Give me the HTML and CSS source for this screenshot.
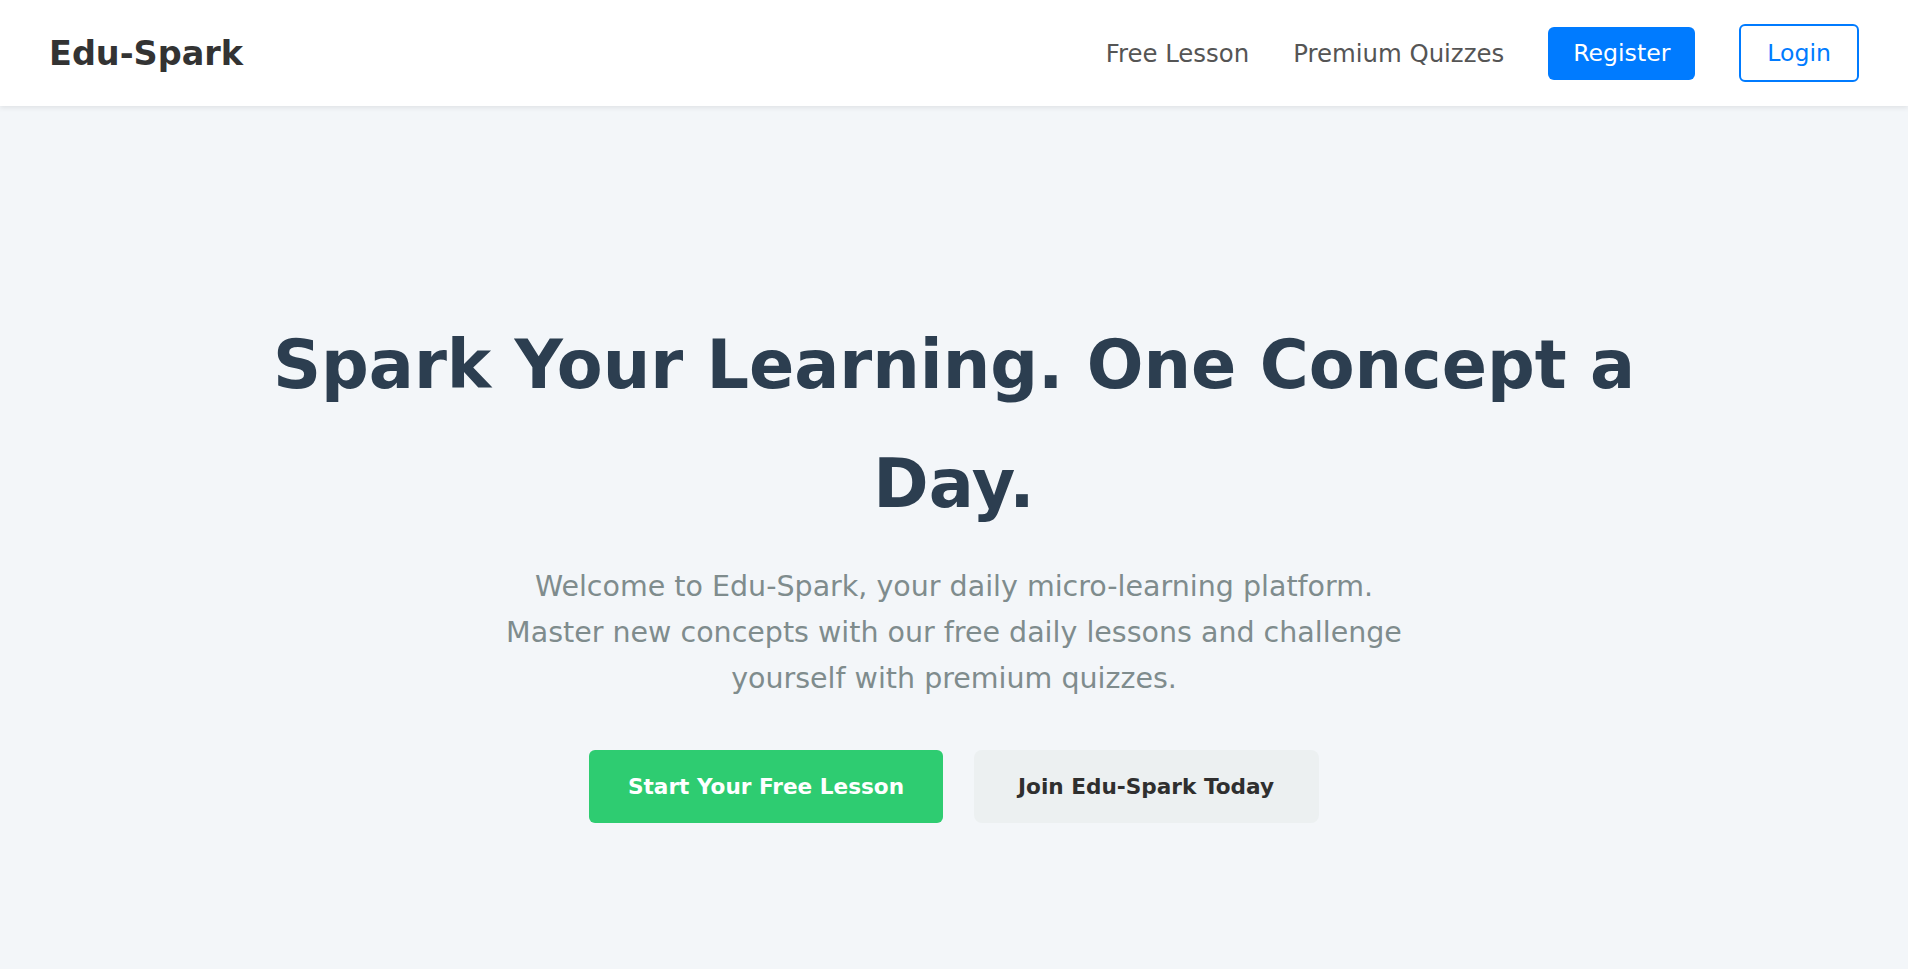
FILE: index.html
```html
<!DOCTYPE html>
<html lang="en">
<head>
<meta charset="utf-8">
<title>Edu-Spark</title>
<link rel="stylesheet" href="styles.css">
</head>
<body>
<header class="site-header">
  <a class="brand" href="#">Edu-Spark</a>
  <nav class="nav">
    <a class="nav-link" href="#">Free Lesson</a>
    <a class="nav-link" href="#">Premium Quizzes</a>
    <a class="btn-register" href="#">Register</a>
    <a class="btn-login" href="#">Login</a>
  </nav>
</header>
<main class="hero">
  <div class="hero-inner">
    <h1 class="hero-title">Spark Your Learning. One Concept a Day.</h1>
    <p class="hero-text">Welcome to Edu-Spark, your daily micro-learning platform. Master new concepts with our free daily lessons and challenge yourself with premium quizzes.</p>
    <div class="hero-actions">
      <a class="btn-primary" href="#">Start Your Free Lesson</a>
      <a class="btn-secondary" href="#">Join Edu-Spark Today</a>
    </div>
  </div>
</main>
</body>
</html>
```
FILE: styles.css
```css
* { box-sizing: border-box; }
html, body { margin: 0; padding: 0; }
body {
  font-family: "DejaVu Sans", "Noto Sans", sans-serif;
  background: #f3f6f9;
  min-height: 969px;
}
a { text-decoration: none; }

.site-header {
  height: 106px;
  background: #ffffff;
  display: flex;
  align-items: center;
  justify-content: space-between;
  padding: 0 49px;
  box-shadow: 0 2px 5px rgba(0, 0, 0, 0.08);
  position: relative;
  z-index: 1;
}
.brand {
  font-size: 33.5px;
  font-weight: 700;
  color: #333333;
}
.nav {
  display: flex;
  align-items: center;
  gap: 44px;
}
.nav-link {
  font-size: 24.4px;
  color: #555555;
}
.btn-register {
  font-size: 23.6px;
  line-height: 36px;
  padding: 8.5px 25px;
  background: #007bff;
  color: #ffffff;
  border-radius: 6px;
}
.btn-login {
  font-size: 23.6px;
  line-height: 36px;
  padding: 9px 26px;
  border: 2px solid #007bff;
  color: #007bff;
  background: #ffffff;
  border-radius: 6px;
}

.hero {
  padding-top: 200px;
}
.hero-inner {
  max-width: 1420px;
  margin: 0 auto;
  text-align: center;
}
.hero-title {
  margin: 0;
  font-size: 66.8px;
  line-height: 119px;
  font-weight: 700;
  color: #2c3e50;
}
.hero-text {
  max-width: 925px;
  margin: 20px auto 0;
  font-size: 28.5px;
  line-height: 46px;
  color: #7f8c8d;
}
.hero-actions {
  margin-top: 48px;
  display: flex;
  justify-content: center;
  gap: 31px;
}
.btn-primary,
.btn-secondary {
  font-size: 21.6px;
  font-weight: 700;
  line-height: 33px;
  padding: 20px 38.5px;
  border-radius: 6px;
}
.btn-primary {
  background: #2ecc71;
  color: #ffffff;
}
.btn-secondary {
  background: #ecf0f1;
  color: #2f2f2f;
  border-radius: 8px;
  padding-left: 44.5px;
  padding-right: 44.5px;
}
```
